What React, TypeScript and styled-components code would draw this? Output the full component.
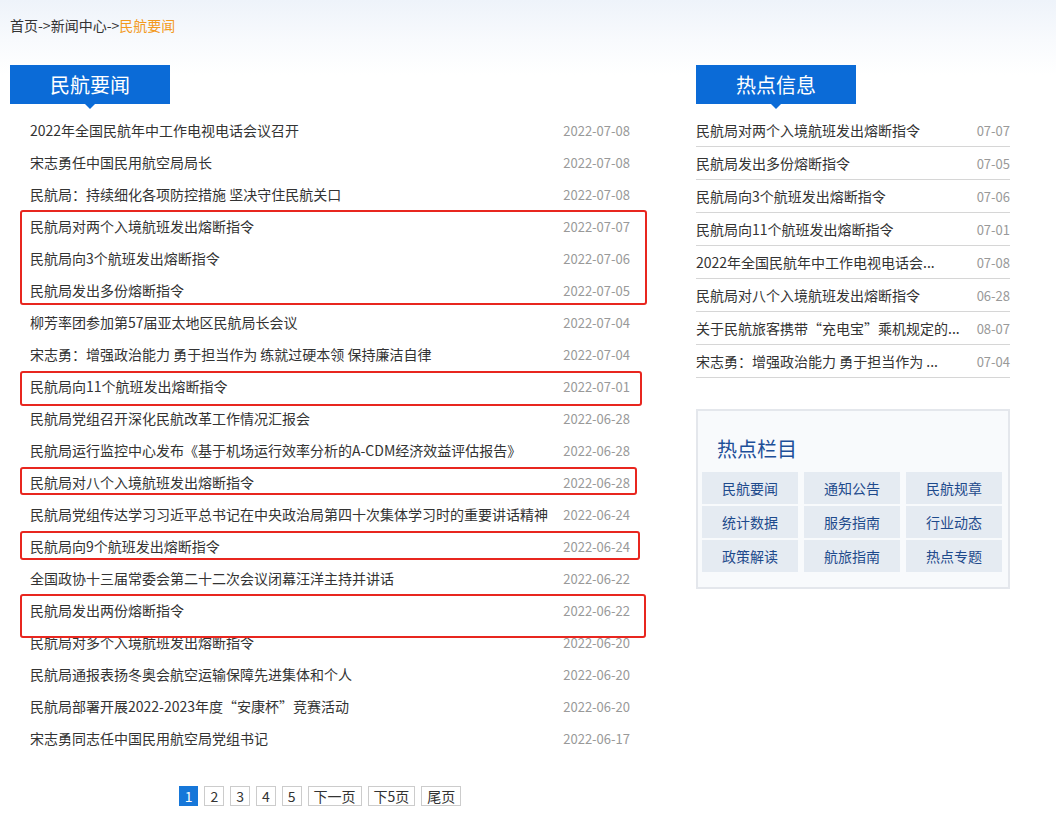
import React from "react";
import styled, { createGlobalStyle } from "styled-components";

const GlobalStyle = createGlobalStyle`
  html, body {
    margin: 0;
    padding: 0;
    background: #fff;
  }
  body {
    font-family: "Noto Sans CJK SC", "Noto Sans", sans-serif;
    color: #333;
  }
`;

const Page = styled.div`
  width: 1056px;
  min-height: 816px;
  background: linear-gradient(#eef3fa 0px, #f8fafd 40px, #ffffff 75px);
  box-sizing: border-box;
  padding: 0 10px;
`;

const Crumb = styled.div`
  height: 50px;
  line-height: 50px;
  font-size: 14px;
  color: #333;
  & > span {
    color: #f39a1e;
  }
`;

const Columns = styled.div`
  display: flex;
  align-items: flex-start;
  margin-top: 15px;
  gap: 56px;
`;

const LeftCol = styled.div`
  position: relative;
  width: 630px;
`;

const RightCol = styled.div`
  width: 314px;
`;

const TabTitle = styled.div`
  position: relative;
  width: 160px;
  height: 39px;
  line-height: 39px;
  background: #0b6bd7;
  color: #fff;
  font-size: 20px;
  text-align: center;
  &::after {
    content: "";
    position: absolute;
    left: 75px;
    bottom: -5px;
    border-left: 5px solid transparent;
    border-right: 5px solid transparent;
    border-top: 5px solid #0b6bd7;
  }
`;

const NewsList = styled.ul`
  list-style: none;
  margin: 10px 0 0;
  padding: 0;
`;

const NewsRow = styled.li`
  display: flex;
  justify-content: space-between;
  align-items: center;
  height: 32px;
  padding: 0 10px 0 20px;
  font-size: 14px;
  color: #333;
`;

const DateText = styled.span`
  font-size: 13px;
  color: #999;
  white-space: nowrap;
`;

const Mark = styled.div`
  position: absolute;
  border: 2px solid #e8261f;
  border-radius: 3px;
  box-sizing: border-box;
  pointer-events: none;
`;

const Pager = styled.div`
  display: flex;
  justify-content: center;
  gap: 6px;
  margin-top: 32px;
  padding-right: 10px;
`;

const PageBtn = styled.span<{ active?: boolean }>`
  display: inline-block;
  height: 20px;
  line-height: 19px;
  padding: 0 5px;
  min-width: 9px;
  text-align: center;
  font-size: 14px;
  box-sizing: border-box;
  border: 1px solid ${(p) => (p.active ? "#1677d9" : "#ccc")};
  background: ${(p) => (p.active ? "#1677d9" : "#fff")};
  color: ${(p) => (p.active ? "#fff" : "#333")};
`;

const HotList = styled.ul`
  list-style: none;
  margin: 10px 0 0;
  padding: 0;
`;

const HotRow = styled.li`
  display: flex;
  align-items: center;
  justify-content: space-between;
  height: 33px;
  border-bottom: 1px solid #d6d6d6;
  box-sizing: border-box;
  font-size: 14px;
  color: #333;
`;

const HotTitle = styled.span`
  white-space: nowrap;
`;

const ColumnBox = styled.div`
  margin-top: 31px;
  border: 2px solid #e4e7ec;
  background: #f8fafc;
  padding: 24px 8px 15px 4px;
`;

const ColumnHead = styled.div`
  font-size: 20px;
  color: #1d4f98;
  line-height: 28px;
  padding-left: 15px;
  margin-bottom: 9px;
`;

const ColumnGrid = styled.div`
  display: grid;
  grid-template-columns: repeat(3, 96px);
  gap: 2px 6px;
`;

const ColumnCell = styled.div`
  height: 32px;
  line-height: 32px;
  text-align: center;
  background: #e5ebf2;
  color: #1e4a8c;
  font-size: 14px;
`;

const news = [
  ["2022年全国民航年中工作电视电话会议召开", "2022-07-08"],
  ["宋志勇任中国民用航空局局长", "2022-07-08"],
  ["民航局：持续细化各项防控措施 坚决守住民航关口", "2022-07-08"],
  ["民航局对两个入境航班发出熔断指令", "2022-07-07"],
  ["民航局向3个航班发出熔断指令", "2022-07-06"],
  ["民航局发出多份熔断指令", "2022-07-05"],
  ["柳芳率团参加第57届亚太地区民航局长会议", "2022-07-04"],
  ["宋志勇：增强政治能力 勇于担当作为 练就过硬本领 保持廉洁自律", "2022-07-04"],
  ["民航局向11个航班发出熔断指令", "2022-07-01"],
  ["民航局党组召开深化民航改革工作情况汇报会", "2022-06-28"],
  ["民航局运行监控中心发布《基于机场运行效率分析的A-CDM经济效益评估报告》", "2022-06-28"],
  ["民航局对八个入境航班发出熔断指令", "2022-06-28"],
  ["民航局党组传达学习习近平总书记在中央政治局第四十次集体学习时的重要讲话精神", "2022-06-24"],
  ["民航局向9个航班发出熔断指令", "2022-06-24"],
  ["全国政协十三届常委会第二十二次会议闭幕汪洋主持并讲话", "2022-06-22"],
  ["民航局发出两份熔断指令", "2022-06-22"],
  ["民航局对多个入境航班发出熔断指令", "2022-06-20"],
  ["民航局通报表扬冬奥会航空运输保障先进集体和个人", "2022-06-20"],
  ["民航局部署开展2022-2023年度“安康杯”竞赛活动", "2022-06-20"],
  ["宋志勇同志任中国民用航空局党组书记", "2022-06-17"],
];

// titles are cut by the site itself, with three dots
const hot = [
  ["民航局对两个入境航班发出熔断指令", "07-07"],
  ["民航局发出多份熔断指令", "07-05"],
  ["民航局向3个航班发出熔断指令", "07-06"],
  ["民航局向11个航班发出熔断指令", "07-01"],
  ["2022年全国民航年中工作电视电话会...", "07-08"],
  ["民航局对八个入境航班发出熔断指令", "06-28"],
  ["关于民航旅客携带“充电宝”乘机规定的...", "08-07"],
  ["宋志勇：增强政治能力 勇于担当作为 ...", "07-04"],
];

const cells = ["民航要闻", "通知公告", "民航规章", "统计数据", "服务指南", "行业动态", "政策解读", "航旅指南", "热点专题"];

// red annotation boxes, relative to the left column
const marks = [
  { left: 10, top: 145, width: 627, height: 95 },
  { left: 10, top: 306, width: 622, height: 35 },
  { left: 10, top: 402, width: 617, height: 28 },
  { left: 10, top: 466, width: 620, height: 29 },
  { left: 10, top: 529, width: 626, height: 44 },
];

const pages = ["1", "2", "3", "4", "5", "下一页", "下5页", "尾页"];

export default function App() {
  return (
    <Page>
      <GlobalStyle />
      <Crumb>
        首页-&gt;新闻中心-&gt;<span>民航要闻</span>
      </Crumb>
      <Columns>
        <LeftCol>
          <TabTitle>民航要闻</TabTitle>
          <NewsList>
            {news.map(([t, d]) => (
              <NewsRow key={t}>
                <span>{t}</span>
                <DateText>{d}</DateText>
              </NewsRow>
            ))}
          </NewsList>
          <Pager>
            {pages.map((p, i) => (
              <PageBtn key={p} active={i === 0}>
                {p}
              </PageBtn>
            ))}
          </Pager>
          {marks.map((m, i) => (
            <Mark key={i} style={m} />
          ))}
        </LeftCol>
        <RightCol>
          <TabTitle>热点信息</TabTitle>
          <HotList>
            {hot.map(([t, d]) => (
              <HotRow key={t}>
                <HotTitle>{t}</HotTitle>
                <DateText>{d}</DateText>
              </HotRow>
            ))}
          </HotList>
          <ColumnBox>
            <ColumnHead>热点栏目</ColumnHead>
            <ColumnGrid>
              {cells.map((c) => (
                <ColumnCell key={c}>{c}</ColumnCell>
              ))}
            </ColumnGrid>
          </ColumnBox>
        </RightCol>
      </Columns>
    </Page>
  );
}
